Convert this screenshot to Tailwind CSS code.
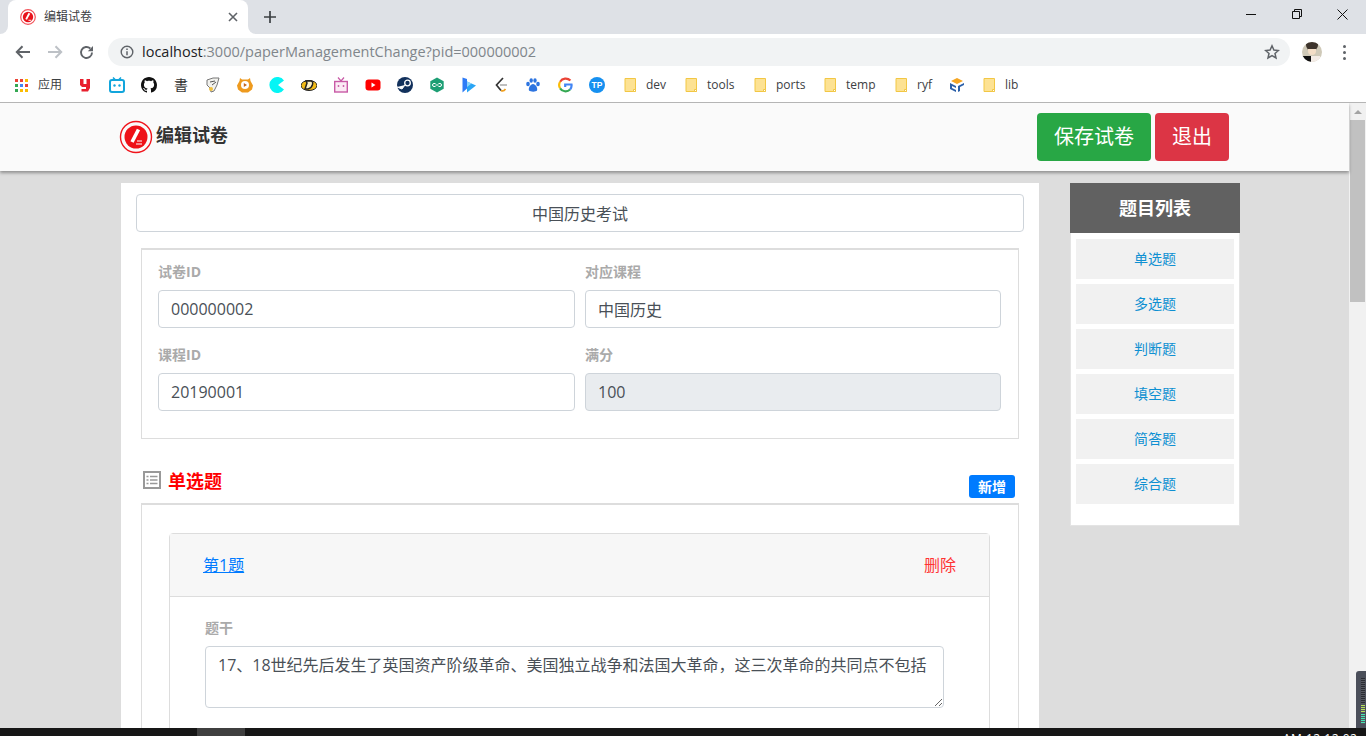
<!DOCTYPE html>
<html lang="zh-CN">
<head>
<meta charset="UTF-8">
<title>编辑试卷</title>
<script src="https://cdn.jsdelivr.net/npm/@tailwindcss/browser@4"></script>
</head>
<body class="w-[1366px] h-[736px] overflow-hidden bg-white font-['Open_Sans','Noto_Sans_CJK_SC',sans-serif] text-[#212529]">

<!-- tab strip -->
<div class="h-[34px] bg-[#dee1e6] flex items-stretch relative">
  <div class="w-2 self-end h-2 bg-white"><div class="w-2 h-2 bg-[#dee1e6] rounded-br-lg"></div></div>
  <div class="w-[240px] bg-white rounded-t-lg flex items-center pl-3 pr-[10px]">
    <svg width="16" height="16" viewBox="0 0 34 34"><circle cx="17" cy="17" r="15.5" fill="none" stroke="#f2545b" stroke-width="2.5"/><circle cx="17" cy="17" r="11" fill="#e8141c"/><path d="M20 9 L13 22" stroke="#fff" stroke-width="4"/><path d="M18 24h6" stroke="#fff" stroke-width="2"/></svg>
    <span class="ml-2 text-xs text-[#3c4043] flex-1">编辑试卷</span>
    <svg width="10" height="10" viewBox="0 0 10 10"><path d="M1 1l8 8M9 1l-8 8" stroke="#5f6368" stroke-width="1.6"/></svg>
  </div>
  <div class="w-2 self-end h-2 bg-white"><div class="w-2 h-2 bg-[#dee1e6] rounded-bl-lg"></div></div>
  <svg class="ml-[7px] self-center" width="14" height="14" viewBox="0 0 14 14"><path d="M7 1v12M1 7h12" stroke="#3c4043" stroke-width="1.7"/></svg>
  <div class="ml-auto flex items-start">
    <div class="w-[46px] h-7 flex items-center justify-center"><svg width="10" height="10" viewBox="0 0 10 10"><path d="M0 5.500h10" stroke="#111" stroke-width="1"/></svg></div>
    <div class="w-[46px] h-7 flex items-center justify-center"><svg width="10" height="10" viewBox="0 0 10 10"><path d="M.5 2.500h7v7h-7zM2.500 2.500v-2h7v7h-2" fill="none" stroke="#111" stroke-width="1"/></svg></div>
    <div class="w-[46px] h-7 flex items-center justify-center pr-[1px]"><svg width="11" height="11" viewBox="0 0 11 11"><path d="M.5.500l10 10M10.500.500l-10 10" stroke="#111" stroke-width="1"/></svg></div>
  </div>
</div>

<!-- address bar -->
<div class="h-[34px] bg-white flex items-center pl-[15px] pt-[2px]">
  <svg width="16" height="14" viewBox="0 0 16 14"><path d="M15 7H2M7.500 1.200L1.800 7l5.700 5.800" fill="none" stroke="#5f6368" stroke-width="2"/></svg>
  <svg class="ml-4" width="16" height="14" viewBox="0 0 16 14"><path d="M1 7h13M8.500 1.200L14.200 7l-5.700 5.800" fill="none" stroke="#bdc1c6" stroke-width="2"/></svg>
  <svg class="ml-4" width="15" height="15" viewBox="0 0 15 15"><path d="M13 7.500a5.500 5.500 0 1 1-1.700-4" fill="none" stroke="#5f6368" stroke-width="1.900"/><path d="M14 1v5.200H8.800z" fill="#5f6368"/></svg>
  <div class="ml-[14px] w-[1182px] h-7 rounded-full bg-[#f1f3f4] flex items-center pl-3 pr-[10px]">
    <svg width="14" height="14" viewBox="0 0 14 14"><circle cx="7" cy="7" r="5.800" fill="none" stroke="#5f6368" stroke-width="1.400"/><path d="M7 6.200v4M7 3.600v1.500" stroke="#5f6368" stroke-width="1.500"/></svg>
    <span class="ml-2 text-[14.500px] text-[#80868b]"><span class="text-[#202124]">localhost</span>:3000/paperManagementChange?pid=000000002</span>
    <svg class="ml-auto" width="16" height="16" viewBox="0 0 16 16"><path d="M8 1.800l1.900 4.200 4.500.5-3.400 3 1 4.500L8 11.700 4 14l1-4.500-3.400-3 4.500-.5z" fill="none" stroke="#5f6368" stroke-width="1.500"/></svg>
  </div>
  <div class="ml-3 w-5 h-5 rounded-full bg-[#cfc9b8] overflow-hidden relative">
    <div class="absolute left-[4px] top-0 w-3 h-[9px] rounded-b-md bg-[#3d342c]"></div>
    <div class="absolute left-[6px] top-[7px] w-2 h-[6px] rounded-b bg-[#f3ddc6]"></div>
    <div class="absolute left-0 bottom-0 w-[9px] h-[6px] bg-[#111]"></div>
    <div class="absolute right-[2px] bottom-0 w-[9px] h-[6px] bg-[#f4ece6]"></div>
  </div>
  <div class="ml-[21px] flex flex-col gap-[3px]">
    <div class="w-[3px] h-[3px] rounded-full bg-[#5f6368]"></div>
    <div class="w-[3px] h-[3px] rounded-full bg-[#5f6368]"></div>
    <div class="w-[3px] h-[3px] rounded-full bg-[#5f6368]"></div>
  </div>
</div>

<!-- bookmarks -->
<div class="h-[35px] bg-white flex items-center pl-[15px] border-b border-[#b5b5b5] text-xs text-[#3c4043]">
  <div class="grid grid-cols-3 gap-[2px] w-[13px]">
    <div class="w-[3px] h-[3px] bg-[#ea4335]"></div><div class="w-[3px] h-[3px] bg-[#ea4335]"></div><div class="w-[3px] h-[3px] bg-[#fbbc04]"></div>
    <div class="w-[3px] h-[3px] bg-[#34a853]"></div><div class="w-[3px] h-[3px] bg-[#4285f4]"></div><div class="w-[3px] h-[3px] bg-[#ea4335]"></div>
    <div class="w-[3px] h-[3px] bg-[#34a853]"></div><div class="w-[3px] h-[3px] bg-[#fbbc04]"></div><div class="w-[3px] h-[3px] bg-[#fbbc04]"></div>
  </div>
  <span class="ml-[10px] w-6">应用</span>
  <div class="flex items-center gap-4 ml-[15px]">
    <svg width="16" height="16" viewBox="0 0 16 16"><path d="M3 2h3.500v5h3V2H13v9l-2 3.500H4.500V12H9v-2H5L3 8z" fill="#e8202e"/></svg>
    <svg width="16" height="16" viewBox="0 0 16 16"><path d="M4 .5l2.500 2.500M12 .5L9.500 3" stroke="#12a5dc" stroke-width="1.500"/><rect x="1" y="3" width="14" height="12" rx="2" fill="none" stroke="#12a5dc" stroke-width="2"/><circle cx="5.500" cy="8.500" r="1.200" fill="#12a5dc"/><circle cx="10.500" cy="8.500" r="1.200" fill="#12a5dc"/></svg>
    <svg width="16" height="16" viewBox="0 0 16 16"><path fill="#111" d="M8 0C3.580 0 0 3.580 0 8c0 3.540 2.290 6.530 5.470 7.590.4.070.55-.17.55-.38 0-.19-.01-.82-.01-1.490-2.010.37-2.530-.49-2.690-.94-.09-.23-.48-.94-.82-1.130-.28-.15-.68-.52-.01-.53.63-.01 1.080.58 1.230.82.720 1.210 1.870.87 2.330.66.070-.52.280-.87.510-1.070-1.780-.2-3.640-.89-3.640-3.950 0-.87.310-1.590.820-2.150-.08-.2-.36-1.020.08-2.120 0 0 .67-.21 2.200.82.640-.18 1.320-.27 2-.27s1.360.09 2 .27c1.530-1.040 2.200-.82 2.200-.82.440 1.100.160 1.920.080 2.120.510.560.820 1.270.820 2.150 0 3.070-1.870 3.750-3.650 3.950.290.250.540.730.540 1.480 0 1.070-.01 1.930-.01 2.200 0 .210.150.460.550.380A8.010 8.010 0 0 0 16 8c0-4.420-3.580-8-8-8z"/></svg>
    <span class="w-4 text-center text-[14px] leading-4 text-[#333]">書</span>
    <svg width="16" height="16" viewBox="0 0 16 16"><path d="M2 3l6-2 6 0-2 7-3 6-3 1-1-4-3-3z" fill="#f2f2ee" stroke="#777" stroke-width="1"/><path d="M5 5l5-1M7 8l4-3" stroke="#555"/><circle cx="6" cy="12" r="2" fill="#f0c040"/></svg>
    <svg width="16" height="16" viewBox="0 0 16 16"><path d="M3 1l2 1.500h6L13 1l.5 3L16 8.500l-1 4L11 15.500H5L1 12.500l-1-4L2.500 4z" fill="#ee9a1e"/><circle cx="8" cy="8" r="4" fill="#fff"/><path d="M6.800 6l3.200 2-3.200 2z" fill="#c4661a"/></svg>
    <svg width="16" height="16" viewBox="0 0 16 16"><path d="M15 3.500A8 8 0 1 0 15 12.500L9 8z" fill="#05f5f5"/></svg>
    <svg width="16" height="16" viewBox="0 0 16 16"><ellipse cx="8" cy="8.500" rx="8" ry="5" fill="#f2bb16" stroke="#222" stroke-width="1"/><path d="M5 4h5c3 0 2 7-3 8H4l2-6z" fill="#fff4c8" stroke="#222" stroke-width="1.500"/></svg>
    <svg width="16" height="16" viewBox="0 0 16 16"><path d="M5 .5L8 4l3-3.500" fill="none" stroke="#c85aa6" stroke-width="1.200"/><rect x="1.700" y="4.500" width="12.600" height="10.500" fill="#fbeaf4" stroke="#c85aa6" stroke-width="1.400"/><circle cx="5.500" cy="9" r=".9" fill="#c85aa6"/><circle cx="10.500" cy="9" r=".9" fill="#c85aa6"/></svg>
    <svg width="16" height="16" viewBox="0 0 16 16"><rect x="0.500" y="2.500" width="15" height="11" rx="3" fill="#f00"/><path d="M6.500 5.500L10.500 8l-4 2.500z" fill="#fff"/></svg>
    <svg width="16" height="16" viewBox="0 0 16 16"><circle cx="8" cy="8" r="8" fill="#12315c"/><path d="M0 10l5 2 3-4" fill="#fff" stroke="#fff"/><circle cx="10.500" cy="6" r="2.800" fill="none" stroke="#fff" stroke-width="1.300"/></svg>
    <svg width="16" height="16" viewBox="0 0 16 16"><path d="M8 .5l6.700 3.700v7.600L8 15.500l-6.700-3.700V4.200z" fill="#1d9e74"/><path d="M6.500 6.500H5a1.500 1.500 0 0 0 0 3h1.500M9.500 6.500H11a1.500 1.500 0 0 1 0 3H9.500M6.500 8h3" fill="none" stroke="#fff" stroke-width="1"/></svg>
    <svg width="16" height="16" viewBox="0 0 16 16"><path d="M1.500 0.500l4.500 1.500v9.500l-4.500 4z" fill="#2e7bf6"/><path d="M6 4.500l9 4-9 7z" fill="#2aa5f5"/><path d="M6 4.500l4.500 2L6 10z" fill="#8bd4fa"/></svg>
    <svg width="16" height="16" viewBox="0 0 16 16"><path d="M10 1L3.500 8l4.500 5.500" fill="none" stroke="#333" stroke-width="1.700"/><path d="M8 13.500c2 1 3.500 0 4.500-1.500" fill="none" stroke="#f0a021" stroke-width="1.700"/><path d="M7 8h7" stroke="#aaa" stroke-width="1.500"/></svg>
    <svg width="16" height="16" viewBox="0 0 16 16"><ellipse cx="3" cy="7" rx="1.800" ry="2.300" fill="#2d74e0"/><ellipse cx="6.200" cy="3.500" rx="1.700" ry="2.300" fill="#2d74e0"/><ellipse cx="10" cy="3.500" rx="1.700" ry="2.300" fill="#2d74e0"/><ellipse cx="13" cy="7" rx="1.800" ry="2.300" fill="#2d74e0"/><path d="M8 7c2.500 0 5 4 4 6.500-1 1.500-6.500 1.500-8 0C3 11 5.500 7 8 7z" fill="#2d74e0"/></svg>
    <svg width="16" height="16" viewBox="0 0 16 16"><path d="M13.400 3.600A6.500 6.500 0 0 0 3.100 4.700" fill="none" stroke="#ea4335" stroke-width="2.200"/><path d="M3.100 4.700a6.500 6.500 0 0 0 0 6.600" fill="none" stroke="#fbbc05" stroke-width="2.200"/><path d="M3.100 11.300a6.500 6.500 0 0 0 10 1.200" fill="none" stroke="#34a853" stroke-width="2.200"/><path d="M13.100 12.500a6.500 6.500 0 0 0 1.400-5H8.200v2.400" fill="none" stroke="#4285f4" stroke-width="2.200"/></svg>
    <svg width="16" height="16" viewBox="0 0 16 16"><circle cx="8" cy="8" r="8" fill="#1690f0"/><text x="8" y="11" text-anchor="middle" font-size="8.500" font-weight="700" font-family="Liberation Sans" fill="#fff">TP</text></svg>
  </div>
  <svg class="ml-[17px]" width="16" height="16" viewBox="0 0 16 16"><path d="M3 1.500h10.500v13H3z" fill="#fde293" stroke="#f2c744"/><path d="M11.500 12.500h2v2h-2z" fill="#fff" stroke="#f2c744"/></svg>
  <span class="ml-[8px] w-[21px]">dev</span>
  <svg class="ml-[16px]" width="16" height="16" viewBox="0 0 16 16"><path d="M3 1.500h10.500v13H3z" fill="#fde293" stroke="#f2c744"/><path d="M11.500 12.500h2v2h-2z" fill="#fff" stroke="#f2c744"/></svg>
  <span class="ml-[8px] w-[28px]">tools</span>
  <svg class="ml-[17px]" width="16" height="16" viewBox="0 0 16 16"><path d="M3 1.500h10.500v13H3z" fill="#fde293" stroke="#f2c744"/><path d="M11.500 12.500h2v2h-2z" fill="#fff" stroke="#f2c744"/></svg>
  <span class="ml-[8px] w-[30px]">ports</span>
  <svg class="ml-[16px]" width="16" height="16" viewBox="0 0 16 16"><path d="M3 1.500h10.500v13H3z" fill="#fde293" stroke="#f2c744"/><path d="M11.500 12.500h2v2h-2z" fill="#fff" stroke="#f2c744"/></svg>
  <span class="ml-[8px] w-[30px]">temp</span>
  <svg class="ml-[17px]" width="16" height="16" viewBox="0 0 16 16"><path d="M3 1.500h10.500v13H3z" fill="#fde293" stroke="#f2c744"/><path d="M11.500 12.500h2v2h-2z" fill="#fff" stroke="#f2c744"/></svg>
  <span class="ml-[8px] w-[15px]">ryf</span>
  <svg class="ml-[17px]" width="16" height="16" viewBox="0 0 16 16"><path d="M8 1l6 3-6 3-6-3z" fill="#f5a623"/><path d="M1 6l6 3v2L3 9v2l4 2v2L1 12zM15 6L9 9v6l2-1v-3l3-1.500V9.500l-3 1.500V10l4-2z" fill="#2b5fa8"/></svg>
  <svg class="ml-4" width="16" height="16" viewBox="0 0 16 16"><path d="M3 1.500h10.500v13H3z" fill="#fde293" stroke="#f2c744"/><path d="M11.500 12.500h2v2h-2z" fill="#fff" stroke="#f2c744"/></svg>
  <span class="ml-[8px]">lib</span>
</div>

<!-- page -->
<div class="h-[625px] flex overflow-hidden relative bg-[#dddddd]">
  <div class="w-[1349px] shrink-0 flex flex-col">
    <header class="h-[68px] shrink-0 bg-[#fafafa] shadow-[0_2px_3px_rgba(0,0,0,0.35)] flex items-center pl-[119px] relative z-10">
      <svg width="34" height="34" viewBox="0 0 34 34"><circle cx="17" cy="17" r="15.500" fill="none" stroke="#f0141c" stroke-width="1.400"/><circle cx="17" cy="17" r="11.500" fill="#ee1118"/><path d="M19.500 9.500L13 22" stroke="#fff" stroke-width="3.600"/><path d="M18 21h5M17 24h6" stroke="#fff" stroke-width="1.200"/></svg>
      <span class="ml-[3px] -mt-1 text-lg font-bold text-[#333]">编辑试卷</span>
      <button class="ml-auto w-[114px] h-12 rounded bg-[#28a745] text-white text-xl">保存试卷</button>
      <button class="ml-1 mr-[120px] w-[74px] h-12 rounded bg-[#dc3545] text-white text-xl">退出</button>
    </header>

    <div class="flex items-start pl-[121px] pt-3">
      <main class="w-[918px] shrink-0 bg-white pt-[11px] px-[15px] h-[600px]">
        <input class="block w-[888px] h-[38px] border border-[#ced4da] rounded text-center text-[#495057] text-base" value="中国历史考试">

        <section class="ml-[5px] mt-4 w-[878px] h-[191px] border-2 border-[#dddddd] border-b border-x pt-[12px] pl-4">
          <div class="grid grid-cols-[417px_416px] gap-x-[10px] gap-y-[17px]">
            <label class="block">
              <span class="block text-sm font-bold text-[#aaaaaa] h-[20px] leading-[20px] mb-2">试卷ID</span>
              <input class="block w-full h-[38px] border border-[#ced4da] rounded px-3 text-base text-[#495057]" value="000000002">
            </label>
            <label class="block">
              <span class="block text-sm font-bold text-[#aaaaaa] h-[20px] leading-[20px] mb-2">对应课程</span>
              <input class="block w-full h-[38px] border border-[#ced4da] rounded px-3 text-base text-[#495057]" value="中国历史">
            </label>
            <label class="block">
              <span class="block text-sm font-bold text-[#aaaaaa] h-[20px] leading-[20px] mb-2">课程ID</span>
              <input class="block w-full h-[38px] border border-[#ced4da] rounded px-3 text-base text-[#495057]" value="20190001">
            </label>
            <label class="block">
              <span class="block text-sm font-bold text-[#aaaaaa] h-[20px] leading-[20px] mb-2">满分</span>
              <input disabled class="block w-full h-[38px] border border-[#ced4da] rounded px-3 text-base text-[#495057] bg-[#e9ecef]" value="100">
            </label>
          </div>
        </section>

        <div class="ml-[7px] mt-[30px] h-[34px] w-[872px] flex items-start">
          <svg class="mt-[2px]" width="18" height="18" viewBox="0 0 18 18"><rect x="1" y="1" width="16" height="16" fill="#fff" stroke="#999999" stroke-width="2"/><path d="M3.500 5.500h2M7 5.500h7.500M3.500 9h2M7 9h7.500M3.500 12.500h2M7 12.500h7.500" stroke="#999999" stroke-width="1.500"/></svg>
          <h2 class="ml-[7px] text-lg leading-[24px] font-bold text-[#ff0000]">单选题</h2>
          <button class="ml-auto mt-[6px] w-[46px] h-[23px] rounded-[3px] bg-[#007bff] text-white text-sm font-bold">新增</button>
        </div>

        <section class="ml-[5px] w-[878px] h-[300px] border-x border-t-2 border-[#dddddd] pt-[28px] pl-[27px]">
          <div class="w-[821px] h-[300px] border border-[#dddddd] rounded">
            <div class="h-[63px] bg-[#f7f7f7] border-b border-[#dddddd] flex items-center justify-between pl-[33px] pr-[33px]">
              <a href="#" class="text-base underline text-[#007bff]">第1题</a>
              <a href="#" class="text-base text-[#ff3333]">删除</a>
            </div>
            <div class="pt-[21px] pl-[35px]">
              <div class="text-sm font-bold text-[#aaaaaa] leading-[20px] mb-2">题干</div>
              <textarea class="block w-[739px] h-[62px] border border-[#ced4da] rounded px-3 py-[6px] text-base leading-6 text-[#495057]">17、18世纪先后发生了英国资产阶级革命、美国独立战争和法国大革命，这三次革命的共同点不包括</textarea>
            </div>
          </div>
        </section>
      </main>

      <aside class="ml-[31px] w-[170px] h-[343px] bg-white border border-t-0 border-[#e4e4e4] shrink-0">
        <div class="-mx-px h-[50px] bg-[#616161] text-white text-lg font-bold flex items-center justify-center">题目列表</div>
        <ul class="pt-[6px] px-[5px] flex flex-col gap-[5px] text-sm text-[#0e90d2]">
          <li class="h-10 bg-[#f1f1f1] flex items-center justify-center">单选题</li>
          <li class="h-10 bg-[#f1f1f1] flex items-center justify-center">多选题</li>
          <li class="h-10 bg-[#f1f1f1] flex items-center justify-center">判断题</li>
          <li class="h-10 bg-[#f1f1f1] flex items-center justify-center">填空题</li>
          <li class="h-10 bg-[#f1f1f1] flex items-center justify-center">简答题</li>
          <li class="h-10 bg-[#f1f1f1] flex items-center justify-center">综合题</li>
        </ul>
      </aside>
    </div>
  </div>

  <!-- scrollbar -->
  <div class="w-[17px] bg-[#f1f1f1] flex flex-col items-center">
    <div class="h-[17px] flex items-center"><div class="w-0 h-0 border-x-[4px] border-x-transparent border-b-[4px] border-b-[#a3a3a3]"></div></div>
    <div class="w-[15px] h-[182px] bg-[#c1c1c1]"></div>
  </div>

  <!-- volume widget sits over the scrollbar -->
  <div class="absolute left-[1356px] top-[568px] w-[10px] h-[57px] bg-[#4b4f5a] rounded-tl-[3px] flex flex-col items-end gap-px pt-[7px] pr-[1px]">
    <div class="w-1 h-[26px] bg-[repeating-linear-gradient(#2a2c33_0_1px,#55585f_1px_2px)]"></div>
    <div class="w-1 h-[8px] bg-[repeating-linear-gradient(#b6e05a_0_1px,#55585f_1px_2px)]"></div>
    <div class="w-1 h-[10px] bg-[repeating-linear-gradient(#45e6b4_0_1px,#55585f_1px_2px)]"></div>
  </div>
</div>

<!-- taskbar, cut off by the bottom edge -->
<div class="h-2 bg-[#161616] flex relative overflow-hidden">
  <div class="ml-[197px] w-[48px] h-2 bg-[#3f3f3f]"></div>
  <span class="absolute left-[1283px] top-[3px] text-xs leading-4 text-white whitespace-nowrap tracking-[0.5px]">AM 12:12:02</span>
</div>

</body>
</html>
